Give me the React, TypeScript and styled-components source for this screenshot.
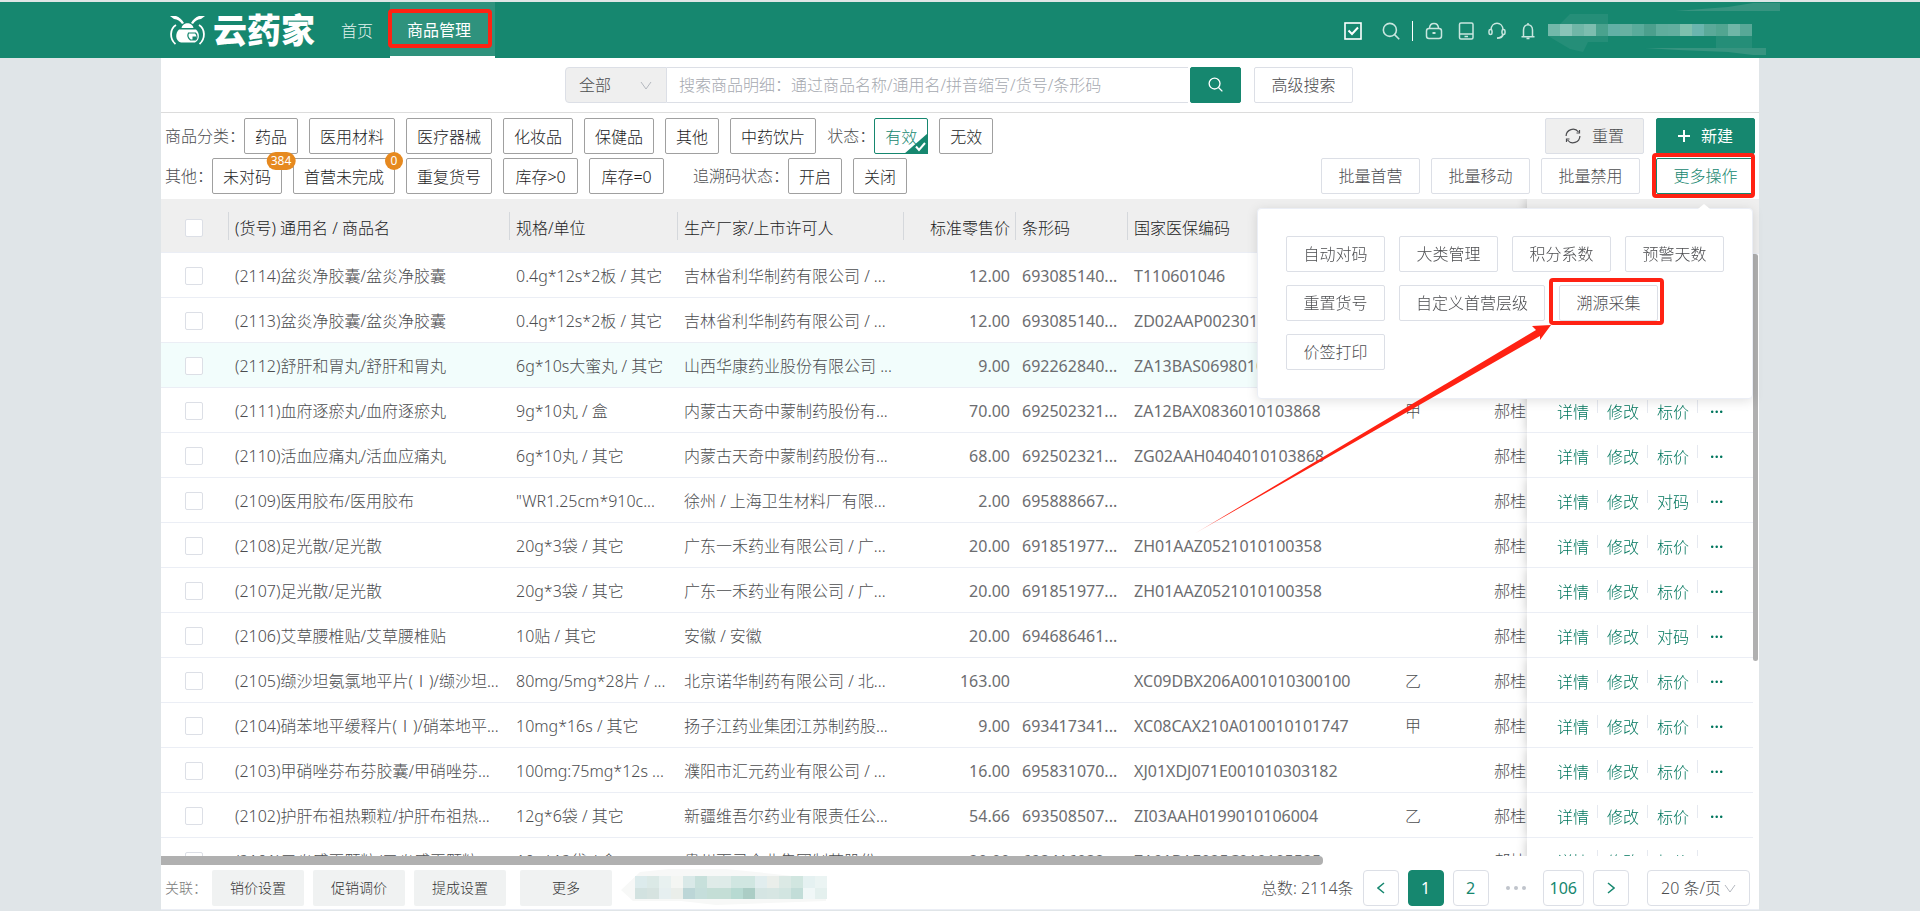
import React from 'react';
import styled, { createGlobalStyle, css } from 'styled-components';

const GREEN = '#16876f';
const RED = '#ff2213';
const TEXT = '#4c4d50';
const FONT = '"Noto Sans", "Noto Sans CJK SC", sans-serif';

const GlobalStyle = createGlobalStyle`
  * { box-sizing: border-box; }
  html, body { margin: 0; padding: 0; }
  body {
    background: #e0e5e8;
    color: ${TEXT};
    font-family: ${FONT};
    font-size: 16px;
    font-weight: 300;
    line-height: 24px;
  }
  button, input, select { font-family: inherit; font-size: inherit; font-weight: inherit; line-height: inherit; }
  button { cursor: pointer; }
`;

const Page = styled.div`
  display: flex;
  flex-direction: column;
  height: 100vh;
  min-height: 600px;
  padding-bottom: 1px;
  border-top: 2px solid #dfe6e6;
  overflow: hidden;
`;

/* ---------- header ---------- */

const Header = styled.header`
  display: flex;
  align-items: stretch;
  flex: none;
  height: 56px;
  padding: 0 160px 0 170px;
  background: ${GREEN};
  color: #fff;
`;

const Brand = styled.a`
  display: flex;
  align-items: center;
  gap: 8px;
  width: 154px;
  color: #fff;
  text-decoration: none;
`;

const BrandName = styled.span`
  font-size: 34px;
  line-height: 40px;
  font-weight: 900;
  white-space: nowrap;
`;

const Nav = styled.nav`
  display: flex;
`;

const frame = css`
  &::after {
    content: '';
    position: absolute;
    border: 4px solid ${RED};
    border-radius: 4px;
    pointer-events: none;
  }
`;

const NavLink = styled.a<{ $active?: boolean }>`
  position: relative;
  display: flex;
  align-items: center;
  justify-content: center;
  padding: 2px 17px 0;
  color: #e2f2ee;
  text-decoration: none;
  ${(p) =>
    p.$active &&
    css`
      padding-right: 24px;
      background: #2f927d;
      color: #fff;
      font-weight: 400;
      border-bottom: 2px solid #fff;
      ${frame}
      &::after { left: -2px; right: 3px; top: 7px; bottom: 8px; }
    `}
`;

const HeaderTools = styled.div`
  display: flex;
  align-items: center;
  margin-left: auto;
  padding-top: 2px;
`;

const ToolButton = styled.button<{ $gap?: number }>`
  display: flex;
  width: 18px;
  height: 18px;
  margin: 0 ${(p) => p.$gap ?? 12}px 0 0;
  padding: 0;
  border: 0;
  background: none;
  color: #c9e6df;
`;

const ToolDivider = styled.span`
  width: 1px;
  height: 20px;
  margin-right: 12px;
  background: #fff;
`;

const UserMosaic = styled.svg`
  display: block;
  margin: -2px -20px 0 0;
`;

/* ---------- main ---------- */

const Main = styled.main`
  display: flex;
  flex-direction: column;
  flex: 1;
  min-height: 0;
  margin: 0 161px;
  border-bottom: 1px solid #ebeef5;
  background: #fff;
`;

const SearchBar = styled.form`
  display: flex;
  align-items: center;
  justify-content: center;
  flex: none;
  height: 55px;
  padding: 0 2px 1px 0;
  border-bottom: 1px solid #dcdcdc;
`;

const SelectWrap = styled.label<{ $width: number; $shade?: boolean }>`
  position: relative;
  display: flex;
  width: ${(p) => p.$width}px;
  height: 36px;
  border: 1px solid #dcdfe6;
  border-radius: ${(p) => (p.$shade ? '4px 0 0 4px' : '4px')};
  background: ${(p) => (p.$shade ? '#efefef' : '#fff')};
  color: #b4b8bf;
`;

const Select = styled.select`
  flex: 1;
  width: 100%;
  padding: 0 0 0 13px;
  border: 0;
  appearance: none;
  background: transparent;
  color: ${TEXT};
`;

const SelectArrow = styled.svg<{ $right: number }>`
  position: absolute;
  right: ${(p) => p.$right}px;
  top: 12px;
  pointer-events: none;
`;

const SearchInput = styled.input`
  width: 521px;
  height: 36px;
  margin-right: 2px;
  padding: 0 12px;
  border: 1px solid #dcdfe6;
  border-width: 1px 0;
  background: #fff;
  color: ${TEXT};
  &::placeholder { color: #a6a9b0; opacity: 1; }
`;

const Button = styled.button<{ $kind?: 'plain' | 'shade' | 'primary' | 'outline'; $framed?: 'tight' | 'loose' }>`
  position: relative;
  display: inline-flex;
  align-items: center;
  justify-content: center;
  gap: 11px;
  min-width: 99px;
  height: 36px;
  padding: 0 16px;
  border: 1px solid #dcdfe6;
  border-radius: 2px;
  background: #fff;
  color: ${TEXT};
  white-space: nowrap;
  ${(p) => p.$kind === 'shade' && css`background: #efefef;`}
  ${(p) => p.$kind === 'primary' && css`background: ${GREEN}; border-color: ${GREEN}; color: #fff; font-weight: 400;`}
  ${(p) => p.$kind === 'outline' && css`border-color: ${GREEN}; color: ${GREEN};`}
  ${(p) => p.$framed && frame}
  ${(p) => p.$framed === 'tight' && css`&::after { inset: -6px -1px -5px -5px; }`}
  ${(p) => p.$framed === 'loose' && css`&::after { inset: -8px -7px -5px -11px; }`}
`;

const SearchButton = styled(Button)`
  min-width: 51px;
  margin-right: 13px;
  padding: 0;
`;

/* ---------- filters ---------- */

const Toolbar = styled.section`
  display: flex;
  justify-content: space-between;
  flex: none;
  padding: 5px 4px;
`;

const ToolbarRows = styled.div<{ $end?: boolean }>`
  display: flex;
  flex-direction: column;
  align-items: ${(p) => (p.$end ? 'flex-end' : 'flex-start')};
  gap: 4px;
`;

const ToolbarRow = styled.div<{ $gap: number }>`
  display: flex;
  align-items: center;
  gap: ${(p) => p.$gap}px;
`;

const FilterLabel = styled.span<{ $lead?: boolean }>`
  margin-left: ${(p) => (p.$lead ? 18 : 0)}px;
  margin-right: -12px;
  white-space: nowrap;
`;

const Chip = styled.button<{ $on?: boolean; $wide?: boolean }>`
  position: relative;
  min-width: ${(p) => (p.$wide ? 75 : 54)}px;
  height: 36px;
  padding: 2px 10px 0;
  border: 1px solid ${(p) => (p.$on ? GREEN : '#a0a0a0')};
  border-radius: 2px;
  background: #fff;
  color: ${(p) => (p.$on ? GREEN : '#1c1c1e')};
  white-space: nowrap;
`;

const ChipCheck = styled.svg`
  position: absolute;
  right: -1px;
  bottom: -1px;
`;

const Badge = styled.span`
  position: absolute;
  z-index: 2;
  top: -7px;
  left: 100%;
  transform: translateX(-50%);
  min-width: 18px;
  height: 18px;
  padding: 0 4px;
  border-radius: 9px;
  background: #e6891f;
  color: #fff;
  font-size: 12px;
  font-weight: 400;
  line-height: 18px;
`;

const MoreAnchor = styled.div`
  position: relative;
  margin-left: 5px;
`;

const Popover = styled.div`
  position: absolute;
  z-index: 10;
  top: 50px;
  right: 2px;
  display: flex;
  flex-direction: column;
  gap: 13px;
  width: 496px;
  height: 191px;
  padding: 27px 28px;
  border: 1px solid #ebeef5;
  border-radius: 4px;
  background: #fff;
  box-shadow: 0 2px 12px rgba(0, 0, 0, 0.12);
  &::before {
    content: '';
    position: absolute;
    top: -5px;
    right: 42px;
    border: 6px solid transparent;
    border-top-width: 0;
    border-bottom: 5px solid #fff;
  }
`;

const PopoverRow = styled.div`
  display: flex;
  gap: 14px;
`;

const Pointer = styled.svg`
  position: absolute;
  right: 105px;
  top: 37px;
  pointer-events: none;
`;

/* ---------- table ---------- */

const TableArea = styled.section`
  display: grid;
  grid-template-columns: minmax(0, 1fr) 6px;
  grid-template-rows: minmax(0, 1fr) 9px;
  flex: 1;
  min-height: 0;
`;

const TableView = styled.div`
  overflow: hidden;
`;

const Table = styled.table`
  width: 100%;
  min-width: 1680px;
  border-collapse: separate;
  border-spacing: 0;
  table-layout: fixed;
`;

const Th = styled.th<{ $line?: boolean; $right?: boolean }>`
  height: 54px;
  padding: 0;
  border-bottom: 1px solid #ebeef5;
  background: #efefef;
  color: #1c1c1e;
  font-weight: inherit;
  text-align: ${(p) => (p.$right ? 'right' : 'left')};
  white-space: nowrap;
  > div {
    display: flex;
    align-items: center;
    justify-content: ${(p) => (p.$right ? 'flex-end' : 'flex-start')};
    height: 28px;
    padding: 4px 5px 0 6px;
    border-right: ${(p) => (p.$line ? 1 : 0)}px solid #d5d8dc;
  }
`;

const Td = styled.td<{ $right?: boolean; $digits?: boolean }>`
  height: 45px;
  padding: 2px 6px 0;
  border-bottom: 1px solid #ebeef5;
  overflow: hidden;
  text-align: ${(p) => (p.$right ? 'right' : 'left')};
  white-space: nowrap;
  ${(p) => p.$digits && css`color: #6c6d70; font-weight: 400;`}
`;

const Tr = styled.tr<{ $hover?: boolean }>`
  background: ${(p) => (p.$hover ? '#f2fdfc' : '#fff')};
`;

const stickyCell = css`
  position: sticky;
  right: 0;
  box-shadow: 0 0 10px rgba(0, 0, 0, 0.24);
  clip-path: inset(0 0 0 -12px);
`;

const StickyTh = styled(Th)`
  ${stickyCell}
`;

const StickyTd = styled(Td)`
  ${stickyCell}
  padding: 3px 0 0 21px;
  background: #fff;
`;

const Actions = styled.div`
  display: flex;
  align-items: flex-start;
`;

const ActionLink = styled.a`
  padding: 0 9px;
  background: linear-gradient(#e6e9f0, #e6e9f0) right 0 top 0 / 1px 13px no-repeat;
  color: #00765d;
  text-decoration: none;
  &:last-child { background: none; padding-left: 12px; font-weight: 600; }
`;

const CheckBox = styled.input`
  display: block;
  width: 18px;
  height: 18px;
  margin: 0 0 0 18px;
  border: 1px solid #dcdfe6;
  border-radius: 2px;
  appearance: none;
  background: #fff;
`;

const VTrack = styled.div`
  &::before {
    content: '';
    display: block;
    height: 54px;
    background: #efefef;
    border-bottom: 1px solid #ebeef5;
  }
`;

const VThumb = styled.div`
  width: 5px;
  height: 62%;
  border-radius: 0 3px 3px 3px;
  background: #b0b0b0;
`;

const HThumb = styled.div`
  width: 73%;
  height: 9px;
  border-radius: 0 4px 4px 0;
  background: #b0b0b0;
`;

/* ---------- footer ---------- */

const Footer = styled.footer`
  display: flex;
  align-items: center;
  justify-content: space-between;
  flex: none;
  height: 44px;
  padding: 1px 9px 0 4px;
`;

const FooterGroup = styled.div`
  display: flex;
  align-items: center;
  gap: 9px;
`;

const FooterLabel = styled.span`
  width: 38px;
  color: #7c7c7c;
  font-size: 14px;
  white-space: nowrap;
`;

const LinkButton = styled.button<{ $apart?: boolean }>`
  width: 92px;
  height: 36px;
  margin-left: ${(p) => (p.$apart ? 5 : 0)}px;
  padding: 0;
  border: 0;
  border-radius: 2px;
  background: #f0f2f2;
  color: #333;
  font-size: 14px;
`;

const PageButton = styled.button<{ $current?: boolean }>`
  display: flex;
  align-items: center;
  justify-content: center;
  min-width: 36px;
  height: 36px;
  padding: 0 6px;
  border: 1px solid ${(p) => (p.$current ? GREEN : '#dcdfe6')};
  border-radius: 4px;
  background: ${(p) => (p.$current ? GREEN : '#fff')};
  color: ${(p) => (p.$current ? '#fff' : GREEN)};
  font-weight: 400;
`;

const PageGap = styled.span`
  display: flex;
  justify-content: center;
  width: 36px;
`;

const PageSize = styled.div`
  margin-left: 9px;
`;

/* ---------- drawings ---------- */

const BeeLogo = () => (
  <svg width="35" height="29" viewBox="0 0 35 29" fill="none" aria-hidden="true">
    <path d="M0 0 H6 C9 1 12.500 4 14 7 L12 8 C10 5 7.500 3.500 4 3 Z" fill="#fff" />
    <path d="M35 0 H29 C26 1 22.500 4 21 7 L23 8 C25 5 27.500 3.500 31 3 Z" fill="#fff" />
    <path d="M6 9 C-0.500 13 -0.500 23 5.500 28" stroke="#fff" strokeWidth="1.800" />
    <path d="M29 9 C35.500 13 35.500 23 29.500 28" stroke="#fff" strokeWidth="1.800" />
    <path d="M11.500 12 C12.500 5.500 22.500 5.500 23.500 12 Z" fill="#fff" />
    <path d="M9 13.500 H26 C30 17 30 24 25 26.500 H11 C5 25 5 17 9 13.500 Z" fill="#fff" />
    <path d="M18.500 17 H25.500 C27.500 19 27.500 22.500 25.500 24 H20.500 C18 22 17.500 19 18.500 17 Z" stroke={GREEN} strokeWidth="1.200" />
    <path d="M22.500 20.500 H26.500 C26.500 22.500 26 23.500 25 24 H22.500 Z" fill={GREEN} />
  </svg>
);

const Chevron = ({ right }: { right: number }) => (
  <SelectArrow $right={right} width="12" height="12" viewBox="0 0 12 12" fill="none" stroke="currentColor" aria-hidden="true">
    <path d="M1 2 L6 9 L11 2" />
  </SelectArrow>
);

const Magnifier = ({ size }: { size: number }) => (
  <svg width={size} height={size} viewBox="0 0 16 16" fill="none" stroke="currentColor" strokeWidth="1.400" aria-hidden="true">
    <circle cx="7" cy="7" r="5.800" />
    <path d="M11.200 11.200 L15.300 15.300" />
  </svg>
);

const userCells = [
  '#73b8aa', '#8ac4b8', '#70b6a7', '#7dbdaf', '#4aa28e', '#62b0a6', '#68b1a2', '#5aab9b',
  '#4c9f8d', '#60ad9d', '#62ae9f', '#7fc0ad', '#6bb5ae', '#5ba999', '#52a591', '#70b6a7', '#58a897',
];

const tagRows = [
  ['#dcebec', '#dbe9e6', '#e8f1f0', '#f4f6f3', '#d9e9e8', '#c7e0db', '#dfebe8', '#deebe8', '#d0e6e1', '#d0e6e1', '#e1edee', '#eaeeea', '#dbe9e5', '#d1e6e0', '#e5f1f1', '#ebf4f3'],
  ['#d2e2e0', '#d6e3e0', '#e6eff0', '#eaeeea', '#bcd6d7', '#c5dedb', '#c4ded6', '#c4ded6', '#b7dad2', '#abcdc5', '#d5e5e3', '#d7e6e3', '#d2e5e1', '#c2ddd8', '#f0f7f7', '#e4f0ee'],
];

/* ---------- data ---------- */

type Row = [id: string, name: string, spec: string, maker: string, price: string, barcode: string, code: string, level: string, last?: string];

const rows: Row[] = [
  ['2114', '(2114)盆炎净胶囊/盆炎净胶囊', '0.4g*12s*2板 / 其它', '吉林省利华制药有限公司 / ...', '12.00', '693085140...', 'T110601046', ''],
  ['2113', '(2113)盆炎净胶囊/盆炎净胶囊', '0.4g*12s*2板 / 其它', '吉林省利华制药有限公司 / ...', '12.00', '693085140...', 'ZD02AAP0023010', ''],
  ['2112', '(2112)舒肝和胃丸/舒肝和胃丸', '6g*10s大蜜丸 / 其它', '山西华康药业股份有限公司 ...', '9.00', '692262840...', 'ZA13BAS0698010', ''],
  ['2111', '(2111)血府逐瘀丸/血府逐瘀丸', '9g*10丸 / 盒', '内蒙古天奇中蒙制药股份有...', '70.00', '692502321...', 'ZA12BAX0836010103868', '甲'],
  ['2110', '(2110)活血应痛丸/活血应痛丸', '6g*10丸 / 其它', '内蒙古天奇中蒙制药股份有...', '68.00', '692502321...', 'ZG02AAH0404010103868', ''],
  ['2109', '(2109)医用胶布/医用胶布', '"WR1.25cm*910c...', '徐州 / 上海卫生材料厂有限...', '2.00', '695888667...', '', '', '对码'],
  ['2108', '(2108)足光散/足光散', '20g*3袋 / 其它', '广东一禾药业有限公司 / 广...', '20.00', '691851977...', 'ZH01AAZ0521010100358', ''],
  ['2107', '(2107)足光散/足光散', '20g*3袋 / 其它', '广东一禾药业有限公司 / 广...', '20.00', '691851977...', 'ZH01AAZ0521010100358', ''],
  ['2106', '(2106)艾草腰椎贴/艾草腰椎贴', '10贴 / 其它', '安徽 / 安徽', '20.00', '694686461...', '', '', '对码'],
  ['2105', '(2105)缬沙坦氨氯地平片(Ⅰ)/缬沙坦...', '80mg/5mg*28片 / ...', '北京诺华制药有限公司 / 北...', '163.00', '', 'XC09DBX206A001010300100', '乙'],
  ['2104', '(2104)硝苯地平缓释片(Ⅰ)/硝苯地平...', '10mg*16s / 其它', '扬子江药业集团江苏制药股...', '9.00', '693417341...', 'XC08CAX210A010010101747', '甲'],
  ['2103', '(2103)甲硝唑芬布芬胶囊/甲硝唑芬...', '100mg:75mg*12s ...', '濮阳市汇元药业有限公司 / ...', '16.00', '695831070...', 'XJ01XDJ071E001010303182', ''],
  ['2102', '(2102)护肝布祖热颗粒/护肝布祖热...', '12g*6袋 / 其它', '新疆维吾尔药业有限责任公...', '54.66', '693508507...', 'ZI03AAH0199010106004', '乙'],
  ['2101', '(2101)口炎感灭颗粒/口炎感灭颗粒', '10g*12袋 / 盒', '贵州百灵企业集团制药股份...', '20.00', '693416032...', 'ZA01BAE025C010105535', ''],
];

const categories = ['药品', '医用材料', '医疗器械', '化妆品', '保健品', '其他', '中药饮片'];

export default function App() {
  return (
    <>
      <GlobalStyle />
      <Page>
        <Header>
          <Brand href="#">
            <BeeLogo />
            <BrandName>云药家</BrandName>
          </Brand>
          <Nav>
            <NavLink href="#">首页</NavLink>
            <NavLink href="#" $active>商品管理</NavLink>
          </Nav>
          <HeaderTools>
            <ToolButton aria-label="待办" $gap={20}>
              <svg width="18" height="18" viewBox="0 0 18 18" fill="none" stroke="#fff">
                <rect x="1" y="1" width="16" height="16" strokeWidth="1.600" />
                <path d="M4.500 8.500 L8 12 L14 5.500" strokeWidth="2" />
              </svg>
            </ToolButton>
            <ToolButton aria-label="搜索" $gap={12}><Magnifier size={18} /></ToolButton>
            <ToolDivider />
            <ToolButton aria-label="锁屏" $gap={14}>
              <svg width="18" height="18" viewBox="0 0 18 18" fill="none" stroke="currentColor" strokeWidth="1.500">
                <rect x="1.500" y="6.500" width="15" height="10" rx="2.500" />
                <path d="M4.500 6.500 V6 C5 0 13 0 13.500 6 V6.500" />
                <path d="M7.500 11 H10.500" strokeWidth="2" />
              </svg>
            </ToolButton>
            <ToolButton aria-label="移动端" $gap={13}>
              <svg width="18" height="18" viewBox="0 0 18 18" fill="none" stroke="currentColor" strokeWidth="1.500">
                <rect x="2.500" y="1" width="13.500" height="16" rx="1.500" />
                <path d="M2.500 12 H16 M7.500 14.500 H11" />
              </svg>
            </ToolButton>
            <ToolButton aria-label="客服" $gap={13}>
              <svg width="18" height="18" viewBox="0 0 18 18" fill="none" stroke="currentColor" strokeWidth="1.500">
                <path d="M3 8 C3 -1 15 -1 15 8" />
                <rect x="1" y="7.500" width="3" height="5" rx="1.500" />
                <rect x="14" y="7.500" width="3" height="5" rx="1.500" />
                <path d="M15 12.500 C14.500 15 13 16 9 16.200" strokeWidth="1.800" />
              </svg>
            </ToolButton>
            <ToolButton aria-label="通知" $gap={11}>
              <svg width="18" height="18" viewBox="0 0 18 18" fill="none" stroke="currentColor" strokeWidth="1.500">
                <path d="M4.500 14.500 V8 C4.500 1 13.500 1 13.500 8 V14.500 M2.500 14.700 H15.500 M9 1 V3 M7.500 16.500 H10.500" />
              </svg>
            </ToolButton>
            <UserMosaic width="232" height="56" viewBox="0 0 232 56" aria-hidden="true">
              <path d="M127 9 L180 5 L205 1 H232 V9 Z" fill="#379480" />
              <path d="M97 46 H218 V53 L205 53 L180 50 L130 48 Z" fill="#379480" />
              <path d="M0 34 H60 V40 H40 L35 50 L22 47 Z M168 34 H204 V46 H168 Z M12 22 L22 12 H60 V22 Z" fill="#258e78" />
              {userCells.map((c, i) => (
                <rect key={i} x={i * 12} y="22" width="12" height="12" fill={c} />
              ))}
            </UserMosaic>
          </HeaderTools>
        </Header>

        <Main>
          <SearchBar onSubmit={(e) => e.preventDefault()}>
            <SelectWrap $width={102} $shade>
              <Select aria-label="搜索范围" defaultValue="全部">
                <option>全部</option>
              </Select>
              <Chevron right={14} />
            </SelectWrap>
            <SearchInput type="text" aria-label="搜索商品明细" placeholder="搜索商品明细：通过商品名称/通用名/拼音缩写/货号/条形码" />
            <SearchButton $kind="primary" type="submit" aria-label="搜索"><Magnifier size={15} /></SearchButton>
            <Button type="button">高级搜索</Button>
          </SearchBar>

          <Toolbar>
            <ToolbarRows>
              <ToolbarRow $gap={11}>
                <FilterLabel>商品分类：</FilterLabel>
                {categories.map((c) => <Chip key={c}>{c}</Chip>)}
                <FilterLabel>状态：</FilterLabel>
                <Chip $on aria-pressed="true">
                  有效
                  <ChipCheck width="24" height="21" viewBox="0 0 24 21" aria-hidden="true">
                    <path d="M24 0 V21 H0 Z" fill={GREEN} />
                    <path d="M12 13.500 L15 17 L21 10" stroke="#fff" strokeWidth="2" fill="none" />
                  </ChipCheck>
                </Chip>
                <Chip>无效</Chip>
              </ToolbarRow>
              <ToolbarRow $gap={11}>
                <FilterLabel>其他：</FilterLabel>
                <Chip>未对码<Badge>384</Badge></Chip>
                <Chip>首营未完成<Badge>0</Badge></Chip>
                <Chip>重复货号</Chip>
                <Chip $wide>库存&gt;0</Chip>
                <Chip $wide>库存=0</Chip>
                <FilterLabel $lead>追溯码状态：</FilterLabel>
                <Chip>开启</Chip>
                <Chip>关闭</Chip>
              </ToolbarRow>
            </ToolbarRows>
            <ToolbarRows $end>
              <ToolbarRow $gap={12}>
                <Button $kind="shade">
                  <svg width="16" height="16" viewBox="0 0 16 16" fill="none" stroke="currentColor" strokeWidth="1.200" aria-hidden="true">
                    <path d="M1.100 8 A6.900 6.900 0 0 1 13.500 4 M14.900 8 A6.900 6.900 0 0 1 2.500 12" />
                    <path d="M14.500 2 V5 H11.500 M1.500 14 V11 H4.500" />
                  </svg>
                  重置
                </Button>
                <Button $kind="primary">
                  <svg width="12" height="12" viewBox="0 0 12 12" stroke="#fff" strokeWidth="2" aria-hidden="true">
                    <path d="M6 0 V12 M0 6 H12" />
                  </svg>
                  新建
                </Button>
              </ToolbarRow>
              <ToolbarRow $gap={11}>
                <Button>批量首营</Button>
                <Button>批量移动</Button>
                <Button>批量禁用</Button>
                <MoreAnchor>
                  <Button $kind="outline" $framed="tight" aria-expanded="true">更多操作</Button>
                  <Popover>
                    <PopoverRow>
                      <Button>自动对码</Button>
                      <Button>大类管理</Button>
                      <Button>积分系数</Button>
                      <Button>预警天数</Button>
                    </PopoverRow>
                    <PopoverRow>
                      <Button>重置货号</Button>
                      <Button>自定义首营层级</Button>
                      <Button $framed="loose">
                        溯源采集
                        <Pointer width="362" height="216" viewBox="0 0 362 216" aria-hidden="true">
                          <defs>
                            <linearGradient id="fade" gradientUnits="userSpaceOnUse" x1="4" y1="212" x2="34" y2="192">
                              <stop offset="0" stopColor={RED} stopOpacity="0.200" />
                              <stop offset="1" stopColor={RED} />
                            </linearGradient>
                          </defs>
                          <path d="M4 211 L346 7 L342 3 L361 2 L350 17 L350 13 Z" fill="url(#fade)" />
                        </Pointer>
                      </Button>
                    </PopoverRow>
                    <PopoverRow>
                      <Button>价签打印</Button>
                    </PopoverRow>
                  </Popover>
                </MoreAnchor>
              </ToolbarRow>
            </ToolbarRows>
          </Toolbar>

          <TableArea>
            <TableView>
              <Table>
                <colgroup>
                  <col style={{ width: 68 }} />
                  <col style={{ width: 281 }} />
                  <col style={{ width: 168 }} />
                  <col style={{ width: 226 }} />
                  <col style={{ width: 112 }} />
                  <col style={{ width: 112 }} />
                  <col style={{ width: 271 }} />
                  <col style={{ width: 89 }} />
                  <col />
                  <col style={{ width: 226 }} />
                </colgroup>
                <thead>
                  <tr>
                    <Th $line><div><CheckBox type="checkbox" aria-label="全选" /></div></Th>
                    <Th $line><div>(货号) 通用名 / 商品名</div></Th>
                    <Th $line><div>规格/单位</div></Th>
                    <Th $line><div>生产厂家/上市许可人</div></Th>
                    <Th $line $right><div>标准零售价</div></Th>
                    <Th $line><div>条形码</div></Th>
                    <Th $line><div>国家医保编码</div></Th>
                    <Th $line><div /></Th>
                    <Th><div /></Th>
                    <StickyTh><div /></StickyTh>
                  </tr>
                </thead>
                <tbody>
                  {rows.map(([id, name, spec, maker, price, barcode, code, level, last]) => (
                    <Tr key={id} $hover={id === '2112'}>
                      <Td><CheckBox type="checkbox" aria-label={name} /></Td>
                      <Td>{name}</Td>
                      <Td>{spec}</Td>
                      <Td>{maker}</Td>
                      <Td $right $digits>{price}</Td>
                      <Td $digits>{barcode}</Td>
                      <Td $digits>{code}</Td>
                      <Td>{level}</Td>
                      <Td>郝桂</Td>
                      <StickyTd>
                        <Actions>
                          <ActionLink href="#">详情</ActionLink>
                          <ActionLink href="#">修改</ActionLink>
                          <ActionLink href="#">{last ?? '标价'}</ActionLink>
                          <ActionLink href="#">···</ActionLink>
                        </Actions>
                      </StickyTd>
                    </Tr>
                  ))}
                </tbody>
              </Table>
            </TableView>
            <VTrack><VThumb /></VTrack>
            <HThumb />
          </TableArea>

          <Footer>
            <FooterGroup>
              <FooterLabel>关联：</FooterLabel>
              <LinkButton>销价设置</LinkButton>
              <LinkButton>促销调价</LinkButton>
              <LinkButton>提成设置</LinkButton>
              <LinkButton $apart>更多</LinkButton>
              <svg width="206" height="42" viewBox="0 0 206 42" aria-hidden="true">
                <path d="M19 5 L48 2 L105 2 L135 5 L190 11 L205 14 V34 L95 38 L60 34 L12 34 L0 23 Z" fill="#f7f8f7" />
                {tagRows.map((cells, r) =>
                  cells.map((c, i) => <rect key={`${r}-${i}`} x={14 + i * 12} y={9 + r * 12} width="12" height={r ? 11 : 12} fill={c} />),
                )}
              </svg>
            </FooterGroup>
            <FooterGroup>
              <span>总数: 2114条</span>
              <PageButton aria-label="上一页">
                <svg width="8" height="12" viewBox="0 0 8 12" fill="none" stroke="currentColor" strokeWidth="1.500"><path d="M7 1 L1 6 L7 11" /></svg>
              </PageButton>
              <PageButton $current>1</PageButton>
              <PageButton>2</PageButton>
              <PageGap>
                <svg width="20" height="4" viewBox="0 0 20 4" fill="#c0c4cc" aria-hidden="true"><circle cx="2" cy="2" r="2" /><circle cx="10" cy="2" r="2" /><circle cx="18" cy="2" r="2" /></svg>
              </PageGap>
              <PageButton>106</PageButton>
              <PageButton aria-label="下一页">
                <svg width="8" height="12" viewBox="0 0 8 12" fill="none" stroke="currentColor" strokeWidth="1.500"><path d="M1 1 L7 6 L1 11" /></svg>
              </PageButton>
              <PageSize>
                <SelectWrap $width={103}>
                  <Select aria-label="每页条数" defaultValue="20 条/页">
                    <option>20 条/页</option>
                  </Select>
                  <Chevron right={13} />
                </SelectWrap>
              </PageSize>
            </FooterGroup>
          </Footer>
        </Main>
      </Page>
    </>
  );
}
